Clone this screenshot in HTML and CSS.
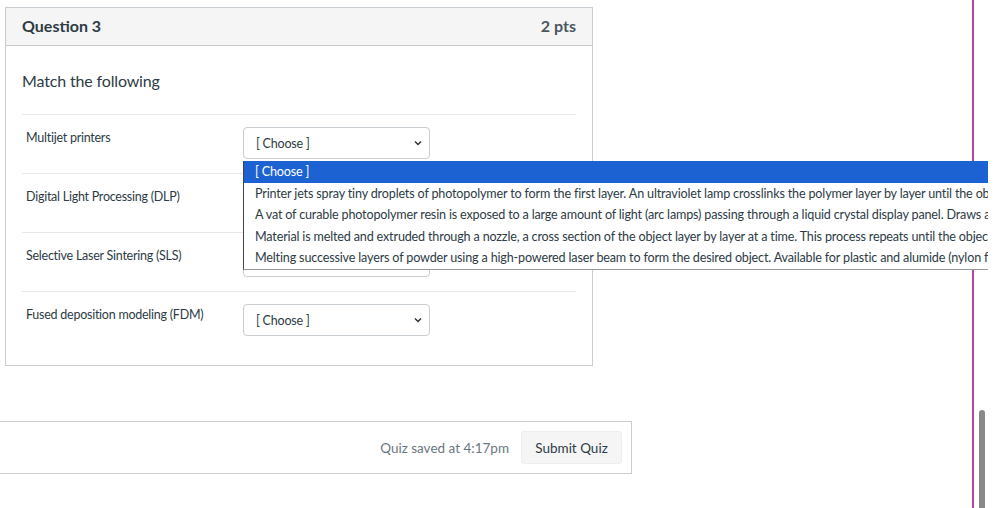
FILE: index.html
```html
<!DOCTYPE html>
<html>
<head>
<meta charset="utf-8">
<link rel="stylesheet" href="styles.css">
</head>
<body>
<div class="page">
  <div class="question">
    <div class="q-header">
      <span class="q-title">Question 3</span>
      <span class="q-pts">2 pts</span>
    </div>
    <div class="q-body">
      <p class="q-text">Match the following</p>
      <div class="match-row">
        <div class="match-label">Multijet printers</div>
        <div class="select-wrap">
          <div class="select"><span>[ Choose ]</span><svg class="chev" width="8" height="6" viewBox="0 0 8 6"><path d="M1 1.5 L4 4.5 L7 1.5" fill="none" stroke="#333" stroke-width="1.5"/></svg></div>
          <ul class="dropdown">
            <li class="selected">[ Choose ]</li>
            <li>Printer jets spray tiny droplets of photopolymer to form the first layer. An ultraviolet lamp crosslinks the polymer layer by layer until the object is built.</li>
            <li>A vat of curable photopolymer resin is exposed to a large amount of light (arc lamps) passing through a liquid crystal display panel. Draws a single layer at a time.</li>
            <li>Material is melted and extruded through a nozzle, a cross section of the object layer by layer at a time. This process repeats until the object is complete.</li>
            <li>Melting successive layers of powder using a high-powered laser beam to form the desired object. Available for plastic and alumide (nylon filled with aluminum).</li>
          </ul>
        </div>
      </div>
      <div class="match-row">
        <div class="match-label">Digital Light Processing (DLP)</div>
        <div class="select-wrap"><div class="select"><span>[ Choose ]</span><svg class="chev" width="8" height="6" viewBox="0 0 8 6"><path d="M1 1.5 L4 4.5 L7 1.5" fill="none" stroke="#333" stroke-width="1.5"/></svg></div></div>
      </div>
      <div class="match-row">
        <div class="match-label">Selective Laser Sintering (SLS)</div>
        <div class="select-wrap"><div class="select"><span>[ Choose ]</span><svg class="chev" width="8" height="6" viewBox="0 0 8 6"><path d="M1 1.5 L4 4.5 L7 1.5" fill="none" stroke="#333" stroke-width="1.5"/></svg></div></div>
      </div>
      <div class="match-row">
        <div class="match-label">Fused deposition modeling (FDM)</div>
        <div class="select-wrap"><div class="select"><span>[ Choose ]</span><svg class="chev" width="8" height="6" viewBox="0 0 8 6"><path d="M1 1.5 L4 4.5 L7 1.5" fill="none" stroke="#333" stroke-width="1.5"/></svg></div></div>
      </div>
    </div>
  </div>
  <div class="footer">
    <span class="saved">Quiz saved at 4:17pm</span>
    <button class="submit">Submit Quiz</button>
  </div>
</div>
<div class="pink-line"></div>
<div class="scroll-thumb"></div>
</body>
</html>
```
FILE: styles.css
```css
html, body {
  margin: 0;
  padding: 0;
  background: #fff;
  overflow: hidden;
  height: 100%;
}
body {
  font-family: Lato, "Open Sans", "Liberation Sans", sans-serif;
  color: #2d3b45;
  position: relative;
}
.page {
  padding-top: 7px;
}
.question {
  margin-left: 5px;
  width: 586px;
  border: 1px solid #c7cdd1;
  background: #fff;
}
.q-header {
  display: flex;
  justify-content: space-between;
  align-items: center;
  height: 37px;
  padding: 0 16px;
  background: #f5f5f5;
  border-bottom: 1px solid #c7cdd1;
}
.q-title {
  font-weight: 700;
  font-size: 16px;
  margin-top: -2px;
}
.q-pts {
  font-weight: 700;
  font-size: 16px;
  color: #4a5761;
  margin-top: -2px;
}
.q-body {
  padding: 0 16px 15px 16px;
}
.q-text {
  margin: 0;
  padding-top: 23px;
  padding-bottom: 21px;
  font-size: 16px;
  letter-spacing: -0.15px;
  line-height: 24px;
}
.match-row {
  display: flex;
  border-top: 1px solid #e6e9eb;
  padding: 12px 0 14px 0;
  height: 32px;
}
.match-label {
  width: 217px;
  padding-left: 4px;
  padding-top: 1px;
  font-size: 12.5px;
  letter-spacing: -0.25px;
  line-height: 20px;
}
.select-wrap {
  position: relative;
}
.select {
  box-sizing: border-box;
  width: 187px;
  height: 32px;
  border: 1px solid #c7cdd1;
  border-radius: 4px;
  display: flex;
  align-items: center;
  justify-content: space-between;
  padding: 0 7px 0 12px;
  font-size: 12.5px;
  letter-spacing: -0.2px;
  background: #fff;
}
.chev {
  display: block;
}
.dropdown {
  position: absolute;
  left: 0;
  top: 34px;
  z-index: 5;
  margin: 0;
  padding: 0;
  list-style: none;
  width: 745px;
  overflow: hidden;
  background: #fff;
  border-left: 1px solid #444;
  border-bottom: 1px solid #999;
  box-sizing: border-box;
}
.dropdown li {
  white-space: nowrap;
  font-size: 12.6px;
  letter-spacing: -0.17px;
  line-height: 21.5px;
  padding-left: 11px;
  color: #2d3b45;
}
.dropdown li.selected {
  background: #1d62d3;
  color: #fff;
}
.footer {
  margin-top: 55px;
  margin-left: -1px;
  width: 633px;
  height: 53px;
  box-sizing: border-box;
  border: 1px solid #c7cdd1;
  display: flex;
  justify-content: flex-end;
  align-items: center;
  gap: 12px;
  padding-right: 9px;
}
.saved {
  font-size: 13.5px;
  color: #6b7780;
}
.submit {
  font-family: Lato, "Open Sans", "Liberation Sans", sans-serif;
  font-size: 13.5px;
  color: #2d3b45;
  background: #f5f5f5;
  border: 1px solid #eceeef;
  border-radius: 3px;
  width: 101px;
  height: 33px;
  padding: 0;
}
.pink-line {
  position: absolute;
  left: 972px;
  top: 0;
  width: 2px;
  height: 100%;
  background: #b6479c;
  z-index: 1;
}
.scroll-thumb {
  position: absolute;
  left: 979px;
  top: 410px;
  width: 6px;
  height: 110px;
  border-radius: 3px;
  background: #8a8a8a;
}
```
